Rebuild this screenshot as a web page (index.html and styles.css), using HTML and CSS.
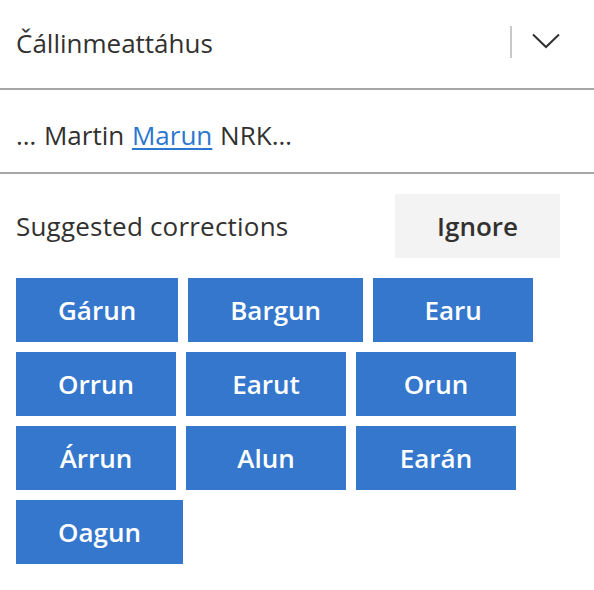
FILE: index.html
```html
<!DOCTYPE html>
<html lang="se">
<head>
<meta charset="utf-8">
<title>Čállinmeattáhus</title>
<link rel="stylesheet" href="styles.css">
</head>
<body>
<div class="pane">
  <header class="header">
    <div class="title">Čállinmeattáhus</div>
    <div class="header-tools">
      <span class="divider"></span>
      <button class="chevron" aria-label="Open">
        <svg width="28" height="16" viewBox="0 0 28 16"><path d="M1 1.5 L14 14 L27 1.5" fill="none" stroke="#323130" stroke-width="2"/></svg>
      </button>
    </div>
  </header>
  <section class="context">
    <p class="sentence">… Martin <a class="word" href="#">Marun</a> NRK…</p>
  </section>
  <section class="suggest">
    <div class="suggest-head">
      <span class="suggest-label">Suggested corrections</span>
      <button class="btn btn-ignore">Ignore</button>
    </div>
    <div class="options">
      <button class="btn btn-primary">Gárun</button>
      <button class="btn btn-primary">Bargun</button>
      <button class="btn btn-primary">Earu</button>
      <button class="btn btn-primary">Orrun</button>
      <button class="btn btn-primary">Earut</button>
      <button class="btn btn-primary">Orun</button>
      <button class="btn btn-primary">Árrun</button>
      <button class="btn btn-primary">Alun</button>
      <button class="btn btn-primary">Earán</button>
      <button class="btn btn-primary">Oagun</button>
    </div>
  </section>
</div>
</body>
</html>
```
FILE: styles.css
```css
* { box-sizing: border-box; }
html, body { margin: 0; padding: 0; background: #ffffff; }
body {
  font-family: "Open Sans", "Noto Sans", "Liberation Sans", sans-serif;
  color: #323130;
  font-size: 26px;
}
.pane { width: 594px; }
.header {
  height: 90px;
  display: flex;
  align-items: center;
  justify-content: space-between;
  padding: 0 24px 0 16px;
  border-bottom: 2px solid #a6a6a6;
}
.title { font-size: 26px; line-height: 36px; margin-top: -2px; }
.header-tools { display: flex; align-items: center; }
.divider { width: 2px; height: 32px; background: #c8c8c8; margin: -4px 10px 0 0; }
.chevron {
  width: 48px; height: 40px;
  border: 0; background: transparent; padding: 0;
  display: flex; align-items: center; justify-content: center;
  margin-top: -6px;
}
.chevron svg { display: block; }
.context {
  height: 84px;
  border-bottom: 2px solid #a6a6a6;
  padding: 0 16px;
  display: flex;
  align-items: center;
}
.sentence { margin: 8px 0 0; line-height: 36px; word-spacing: 1px; }
.word { color: #2b77d0; text-decoration: underline; text-decoration-thickness: 2px; text-underline-offset: 3px; }
.suggest { padding: 20px 34px 0 16px; }
.suggest-head {
  display: flex;
  align-items: center;
  justify-content: space-between;
}
.suggest-label { line-height: 36px; letter-spacing: 0.2px; }
.btn {
  font-family: inherit;
  font-size: 26px;
  font-weight: 600;
  height: 64px;
  min-width: 160px;
  padding: 0 42px;
  border: 0;
  border-radius: 0;
  line-height: 36px;
}
.btn-ignore { background: #f3f3f3; color: #323130; }
.options {
  margin-top: 20px;
  display: flex;
  flex-wrap: wrap;
  gap: 10px;
}
.btn-primary { background: #3477cd; color: #ffffff; }
```
